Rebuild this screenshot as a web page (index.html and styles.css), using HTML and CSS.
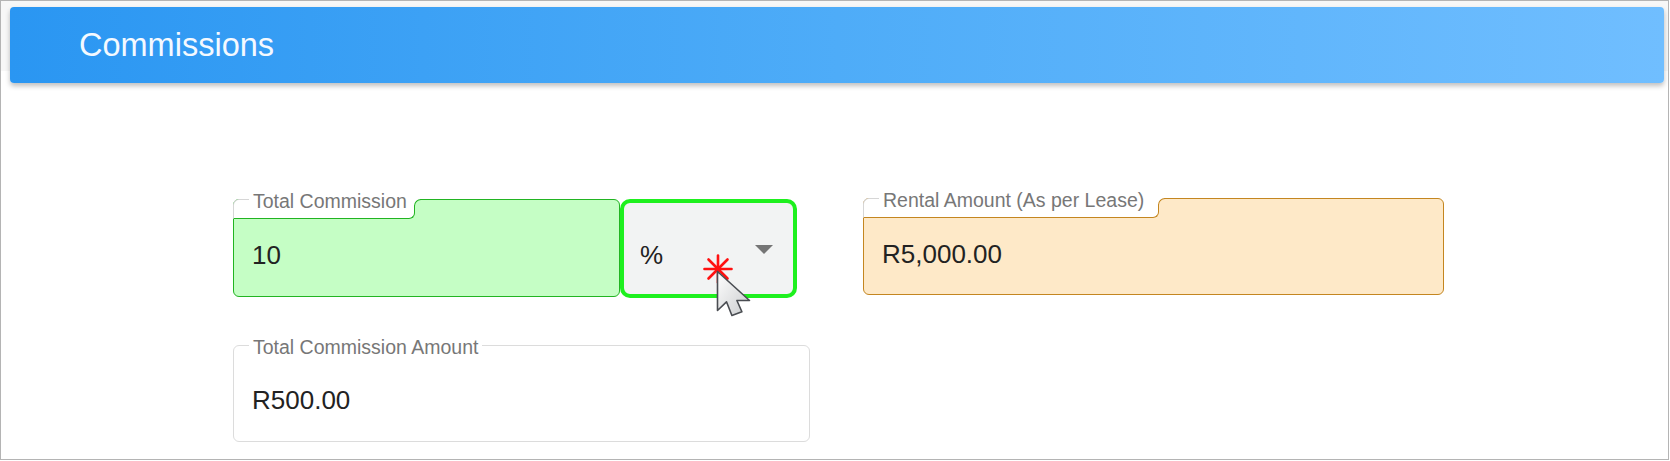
FILE: index.html
```html
<!DOCTYPE html>
<html lang="en">
<head>
  <meta charset="UTF-8" />
  <meta name="viewport" content="width=device-width, initial-scale=1.0" />
  <title>Commissions</title>
  <link rel="stylesheet" href="styles.css">
</head>
<body>
  <div class="frame">
    <!-- Cabecera con degradado -->
    <header class="page-header">
      <h1>Commissions</h1>
    </header>

    <!-- Formulario de comisiones -->
    <main class="form">
      <div class="combo">
        <div class="field field-green">
          <div class="field-tab tab-commission"><span class="field-label">Total Commission</span></div>
          <div class="field-value">10</div>
        </div>
        <div class="select">
          <span class="field-value">%</span>
          <svg class="select-arrow" width="18" height="9" viewBox="0 0 18 9"><path d="M0 0h18l-9 9z" fill="#757575"/></svg>
          <!-- marca del clic y puntero -->
          <svg class="click-mark" width="30" height="30" viewBox="0 0 30 30">
            <g stroke="#ff1010" stroke-width="2.6" stroke-linecap="round">
              <line x1="1.5" y1="15" x2="28.5" y2="15"/>
              <line x1="15" y1="1.5" x2="15" y2="28.5"/>
              <line x1="5.5" y1="5.5" x2="24.5" y2="24.5"/>
              <line x1="24.5" y1="5.5" x2="5.5" y2="24.5"/>
            </g>
          </svg>
          <svg class="pointer" width="36" height="50" viewBox="0 0 36 50">
            <defs>
              <linearGradient id="ptr" x1="0" y1="0" x2="1" y2="1">
                <stop offset="0" stop-color="#ffffff"/>
                <stop offset="1" stop-color="#c9cbcd"/>
              </linearGradient>
            </defs>
            <path d="M1.5 1.5v39l9-8.7 5.4 13.7 10-3.7-5-11.3h12.6z" fill="url(#ptr)" stroke="#4a4d52" stroke-width="1.6" stroke-linejoin="round"/>
          </svg>
        </div>
      </div>

      <div class="field field-orange">
        <div class="field-tab tab-rental"><span class="field-label">Rental Amount (As per Lease)</span></div>
        <div class="field-value">R5,000.00</div>
      </div>

      <div class="field field-plain">
        <div class="field-tab"><span class="field-label">Total Commission Amount</span></div>
        <div class="field-value">R500.00</div>
      </div>
    </main>
  </div>
</body>
</html>
```

FILE: styles.css
```css
/* Reset básico */
*, *::before, *::after {
  box-sizing: border-box;
  margin: 0;
  padding: 0;
}

body {
  background: #fff;
  font-family: 'Liberation Sans', Arial, sans-serif;
  color: #222;
}

/* Marco gris exterior */
.frame {
  width: 1669px;
  height: 460px;
  border: 1px solid #b4b4b4;
  background: linear-gradient(#f7f7f7 0, #f7f7f7 70px, #fff 70px);
  overflow: hidden;
}

/* Cabecera azul */
.page-header {
  display: flex;
  align-items: center;
  height: 76px;
  margin: 6px 4px 0 9px;
  padding-left: 69px;
  border-radius: 4px;
  background: linear-gradient(to right, #2a96f2, #4eacf8 50%, #70beff);
  box-shadow: 0 3px 5px rgba(0,0,0,.25);
}
.page-header h1 {
  font-size: 32.5px;
  font-weight: normal;
  color: #f4f9ff;
}

/* Grid del formulario */
.form {
  display: grid;
  grid-template-columns: 577px 581px;
  column-gap: 53px;
  row-gap: 47px;
  align-items: start;
  margin: 116px 0 0 232px;
}

.combo {
  display: flex;
}

/* Campo con etiqueta sobre el borde */
.field {
  position: relative;
  height: 98px;
  padding: 42px 18px 0;
  border: 1px solid #dcdcdc;
  border-radius: 6px;
  background: #fff;
}
.field-value {
  font-size: 26px;
  line-height: 26px;
  color: #222;
}

.field-tab {
  position: absolute;
  top: -1px;
  left: -1px;
  height: 20px;
  padding: 0 4px 0 15px;
  background: #fff;
  border-top: 1px solid #d6d6d6;
  border-left: 1px solid #d6d6d6;
  border-right: 1px solid transparent;
  border-bottom: 1px solid transparent;
  border-radius: 6px 0 6px 0;
}
.field-label {
  display: block;
  margin-top: -9px;
  padding: 0 4px;
  background: #fff;
  font-size: 19.5px;
  line-height: 20px;
  color: #777;
  white-space: nowrap;
}

/* Variante verde */
.field-green {
  width: 387px;
  border-color: #22b422;
  background: #c5fec5;
}
.field-green .field-tab {
  border-right-color: #22b422;
  border-bottom-color: #22b422;
}

/* Variante naranja */
.field-orange {
  width: 581px;
  height: 97px;
  margin-top: -1px;
  border-color: #c48620;
  background: #fee9c8;
}
.field-orange .field-tab {
  border-right-color: #c48620;
  border-bottom-color: #c48620;
}

/* Esquina redondeada donde sube el relleno */
.field-green .field-tab::after,
.field-orange .field-tab::after {
  content: '';
  position: absolute;
  top: -1px;
  left: 100%;
  width: 8px;
  height: 8px;
  border-top: 1px solid;
  border-left: 1px solid;
  border-top-left-radius: 7px;
  box-shadow: -4px -4px 0 2px #fff;
}
.field-green .field-tab::after {
  border-color: #22b422;
  background: #c5fec5;
}
.field-orange .field-tab::after {
  border-color: #c48620;
  background: #fee9c8;
}

.tab-commission { width: 182px; }
.tab-rental { width: 296px; }

/* Campo simple con borde gris */
.field-plain {
  width: 577px;
  height: 97px;
  padding-top: 41px;
}
.field-plain .field-tab {
  background: transparent;
  border-color: transparent;
}

/* Desplegable seleccionado */
.select {
  position: relative;
  display: flex;
  justify-content: space-between;
  align-items: flex-start;
  width: 177px;
  height: 99px;
  padding: 39px 20px 0 16px;
  border: 4px solid #1ef01e;
  border-radius: 10px;
  background: #f2f3f3;
}
.select-arrow {
  margin-top: 3px;
}

.click-mark {
  position: absolute;
  left: 79px;
  top: 51px;
}
.pointer {
  position: absolute;
  left: 92px;
  top: 67px;
}
```
